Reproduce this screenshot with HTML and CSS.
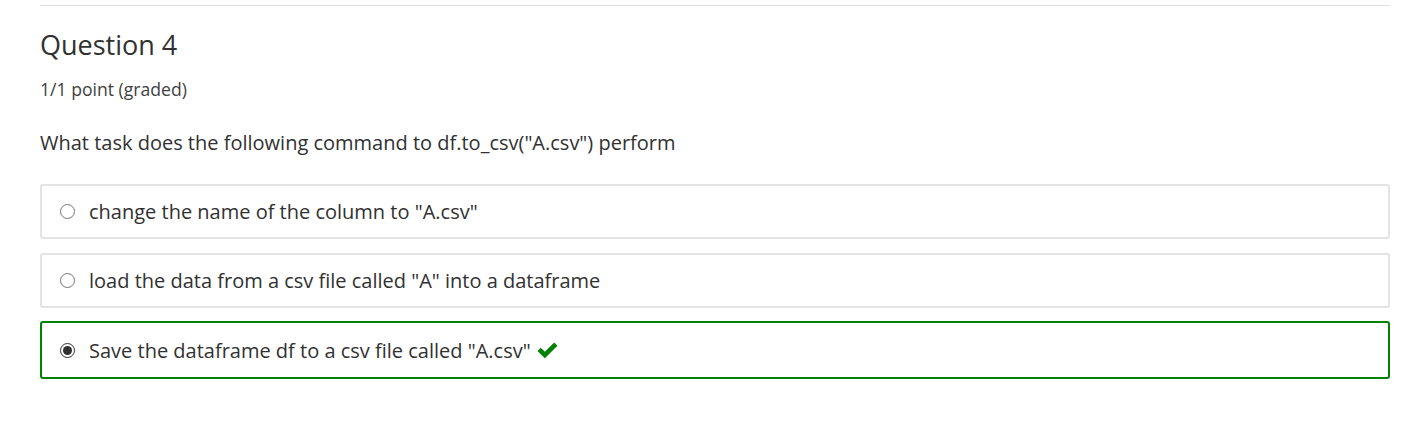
FILE: index.html
```html
<!DOCTYPE html>
<html>
<head>
<meta charset="utf-8">
<link rel="stylesheet" href="styles.css">
</head>
<body>
<div class="problem">
  <div class="rule"></div>
  <h3 class="title">Question 4</h3>
  <div class="meta">1/1 point (graded)</div>
  <p class="prompt">What task does the following command to df.to_csv("A.csv") perform</p>
  <div class="choices">
    <label class="choice">
      <input type="radio" name="q4" class="radio">
      <span class="label-text">change the name of the column to "A.csv"</span>
    </label>
    <label class="choice">
      <input type="radio" name="q4" class="radio">
      <span class="label-text">load the data from a csv file called "A" into a dataframe</span>
    </label>
    <label class="choice correct">
      <input type="radio" name="q4" class="radio" checked>
      <span class="label-text">Save the dataframe df to a csv file called "A.csv"</span>
      <svg class="check" viewBox="0 0 24 20" width="23" height="19"><path d="M1.5 10.5 L4.9 7.1 L9.2 11.4 L19.1 1.5 L22.5 4.9 L9.2 18.2 Z" fill="#008100"/></svg>
    </label>
  </div>
</div>
</body>
</html>
```
FILE: styles.css
```css
html, body {
  margin: 0;
  padding: 0;
  background: #fff;
}
body {
  font-family: "Open Sans", "Liberation Sans", sans-serif;
  color: #313131;
}
.problem {
  padding: 5px 27px 0 40px;
}
.rule {
  height: 1px;
  background: #e0e0e0;
}
.title {
  margin: 21px 0 0 0;
  font-size: 27px;
  font-weight: 400;
  line-height: 36px;
  color: #313131;
}
.meta {
  margin-top: 14px;
  font-size: 17.6px;
  line-height: 24px;
  color: #414141;
}
.prompt {
  margin: 28px 0 0 0;
  font-size: 20px;
  line-height: 28px;
}
.choices {
  margin-top: 27px;
  display: flex;
  flex-direction: column;
  gap: 14px;
}
.choice {
  display: flex;
  align-items: center;
  height: 51px;
  padding: 0 0 0 17px;
  border: 2px solid #e3e3e3;
  border-radius: 3px;
  font-size: 20px;
}
.choice.correct {
  height: 54px;
  border-color: #008100;
  margin-top: -1px;
}
.radio {
  width: 15px;
  height: 15px;
  margin: 0 14px 0 1px;
  accent-color: #313131;
}
.check {
  margin-left: 5px;
}
```
